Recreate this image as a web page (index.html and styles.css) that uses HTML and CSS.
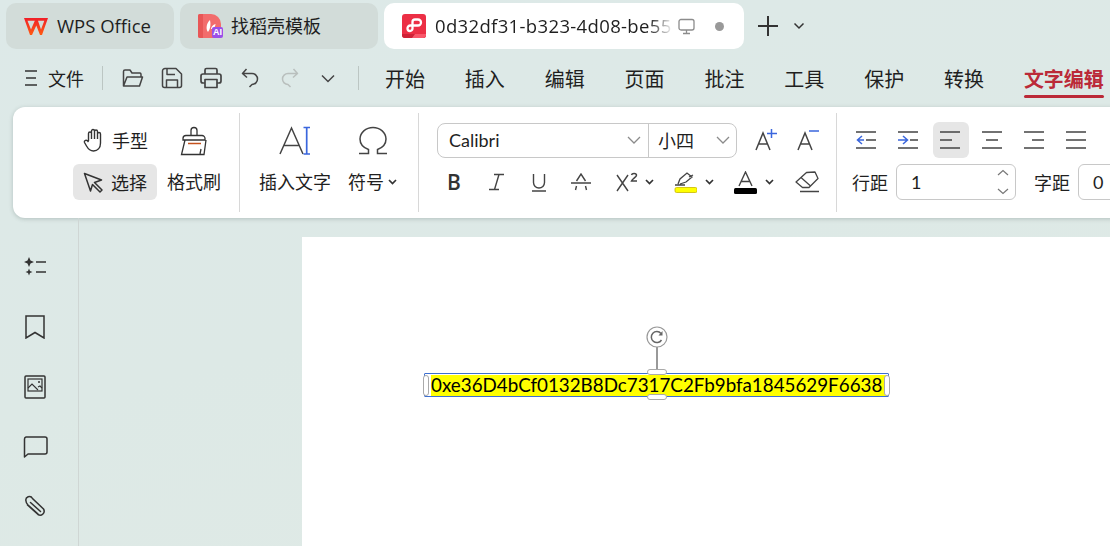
FILE: index.html
```html
<!DOCTYPE html>
<html lang="zh-CN">
<head>
<meta charset="utf-8">
<title>WPS Office</title>
<link rel="stylesheet" href="styles.css">
</head>
<body>
<div class="app">
  <header class="tabbar">
    <div class="doc-tab home-tab">
      <svg class="logo-wps" width="24" height="17" viewBox="0 0 24 17"><defs><linearGradient id="wpsRed" x1="0" y1="0" x2="0" y2="1"><stop offset="0" stop-color="#f01f28"/><stop offset="1" stop-color="#ff5a12"/></linearGradient></defs><path d="M0 0H24L18 17H16L12.300 7.500 8 17H6ZM3.500 2.800 7 11.500 10.800 2.800ZM14 2.800 17 11.500 20.300 2.800Z" fill="url(#wpsRed)" fill-rule="evenodd"/></svg>
      <span class="tab-title">WPS Office</span>
    </div>
    <div class="doc-tab shell-tab">
      <span class="logo-shell">
        <svg width="24" height="24" viewBox="0 0 24 24"><path d="M0 2a2 2 0 0 1 2-2H13a10 10 0 0 1 10 10V24H2a2 2 0 0 1-2-2Z" fill="#f26c6c"/><path d="M0 2a2 2 0 0 1 2-2H5V24H2a2 2 0 0 1-2-2Z" fill="#e85656"/><path d="M10 18C7.500 15 8.500 9 12 6 13 10 12.500 15 10 18ZM13 15C13 13 15 10.500 17.500 10 17.500 12.500 15.500 15 13 15Z" fill="#fff"/></svg>
        <span class="ai-badge">AI</span>
      </span>
      <span class="tab-title">找稻壳模板</span>
    </div>
    <div class="doc-tab active-tab">
      <svg width="24" height="24" viewBox="0 0 24 24"><rect width="24" height="24" rx="3" fill="#ec2f45"/><path d="M0 21V20H24V21A3 3 0 0 1 21 24H3A3 3 0 0 1 0 21Z" fill="#cf2236"/><path d="M13 20H24V21A3 3 0 0 1 21 24H10Z" fill="#f9576a"/><path d="M10 11.500H16A2.800 2.800 0 0 0 16 5.500H13A2.500 2.500 0 0 0 10.500 8V14.500A2.500 2.500 0 0 1 8 17 2.500 2.500 0 0 1 5.500 14.500 2.800 2.800 0 0 1 8.500 11.500H10" fill="none" stroke="#fff" stroke-width="2.300"/></svg>
      <span class="tab-title active-title">0d32df31-b323-4d08-be55</span>
      <svg class="monitor" width="17" height="17" viewBox="0 0 17 17"><rect x="1" y="1.500" width="15" height="10.500" rx="2" fill="none" stroke="#8c8c8c" stroke-width="1.300"/><path d="M8.500 12V15M5 15.500H12" stroke="#8c8c8c" stroke-width="1.300"/></svg>
      <span class="dot"></span>
    </div>
    <svg class="new-tab" width="22" height="22" viewBox="0 0 22 22"><path d="M11 1V21M1 11H21" stroke="#333" stroke-width="2"/></svg>
    <svg class="new-caret" width="12" height="8" viewBox="0 0 12 8"><path d="M1.500 1.500 6 6 10.500 1.500" fill="none" stroke="#333" stroke-width="1.500"/></svg>
  </header>

  <nav class="menubar">
    <div class="file-menu">
      <svg width="14" height="18" viewBox="0 0 14 18"><path d="M1 2H13M2 9H12M1 16H13" stroke="#333" stroke-width="1.500"/></svg>
      <span>文件</span>
    </div>
    <span class="menu-sep"></span>
    <div class="quick-tools">
      <svg width="22" height="20" viewBox="0 0 22 20"><path d="M1.500 18V3.500A1.500 1.500 0 0 1 3 2H8L10 5H18A1.500 1.500 0 0 1 19 6.500V9M1.500 18 5 9H20.500L17.500 18Z" fill="none" stroke="#444" stroke-width="1.500" stroke-linejoin="round"/></svg>
      <svg width="22" height="22" viewBox="0 0 22 22"><path d="M4 1.500H15L20.500 7V18.500A2 2 0 0 1 18.500 20.500H3.500A2 2 0 0 1 1.500 18.500V4A2.500 2.500 0 0 1 4 1.500ZM6 1.500V7.500H14M5.500 20.500V13H16.500V20.500" fill="none" stroke="#444" stroke-width="1.500" stroke-linejoin="round"/></svg>
      <svg width="22" height="22" viewBox="0 0 22 22"><path d="M5 7V3A1.500 1.500 0 0 1 6.500 1.500H15.500A1.500 1.500 0 0 1 17 3V7M5 16H3A2 2 0 0 1 1 14V9A2 2 0 0 1 3 7H19A2 2 0 0 1 21 9V14A2 2 0 0 1 19 16H17M5 12.500H17V20.500H5Z" fill="none" stroke="#444" stroke-width="1.700" stroke-linejoin="round"/></svg>
      <svg width="18" height="20" viewBox="0 0 18 20"><path d="M5.500 1 1.500 5.500 6 9.500M2 5.500H11A5.500 5.500 0 0 1 11 16.500L8.500 19" fill="none" stroke="#444" stroke-width="1.500" stroke-linejoin="round"/></svg>
      <svg width="18" height="20" viewBox="0 0 18 20"><path d="M12.500 1 16.500 5.500 12 9.500M16 5.500H7A5.500 5.500 0 0 0 7 16.500L9.500 19" fill="none" stroke="#b9bfbd" stroke-width="1.500" stroke-linejoin="round"/></svg>
      <svg width="14" height="9" viewBox="0 0 14 9"><path d="M1 1.500 7 7.500 13 1.500" fill="none" stroke="#444" stroke-width="1.500"/></svg>
    </div>
    <span class="menu-sep second"></span>
    <div class="ribbon-tabs">
      <span>开始</span><span>插入</span><span>编辑</span><span>页面</span><span>批注</span><span>工具</span><span>保护</span><span>转换</span><span class="tab-on">文字编辑</span>
    </div>
  </nav>

  <section class="ribbon">
    <div class="group group-tools">
      <div class="mode-col">
        <div class="mode-item">
          <svg width="22" height="24" viewBox="0 0 22 24"><path d="M5.500 13V5.500A1.500 1.500 0 0 1 8.500 5.500V11M8.500 11V3A1.500 1.500 0 0 1 11.500 3V11M11.500 11V3.500A1.500 1.500 0 0 1 14.500 3.500V11M14.500 11V6A1.500 1.500 0 0 1 17.500 6V15C17.500 20 14.500 23 10.500 23 7 23 5.500 21.500 3.500 18L1.500 14.500C.8 12.500 3.500 11 5.500 14" fill="none" stroke="#333" stroke-width="1.400" stroke-linejoin="round"/></svg>
          <span>手型</span>
        </div>
        <div class="mode-item is-on">
          <svg width="21" height="21" viewBox="0 0 21 21"><path d="M1.500 1.500 18.500 8 11.500 10.500 19 18 17 20 9.500 12.500 7.500 19Z" fill="none" stroke="#333" stroke-width="1.500" stroke-linejoin="round"/></svg>
          <span>选择</span>
        </div>
      </div>
      <div class="big-tool painter">
        <svg width="28" height="30" viewBox="0 0 28 30"><path d="M11 9V4.500A3 3 0 0 1 17 4.500V9M3 12.500A3 3 0 0 1 6 9.500H22A3 3 0 0 1 25 12.500V14H3ZM5 14 1.500 28.500H24L26 14" fill="none" stroke="#333" stroke-width="1.300"/><path d="M8 17.500H21" stroke="#c5521d" stroke-width="1.500"/><path d="M20 28 21 23" stroke="#333" stroke-width="1.300"/></svg>
        <span>格式刷</span>
      </div>
    </div>

    <div class="group group-insert">
      <div class="big-tool insert-text">
        <svg width="32" height="30" viewBox="0 0 32 30"><path d="M1 28 12.500 2 24 28M5 19.500H20" fill="none" stroke="#444" stroke-width="1.500"/><path d="M24.500 1.500H31M24.500 28H31M27.700 1.500V28" fill="none" stroke="#3a66dd" stroke-width="1.700"/></svg>
        <span>插入文字</span>
      </div>
      <div class="big-tool symbol">
        <svg width="30" height="30" viewBox="0 0 30 30"><path d="M1 27.500H10.500V23.500C5 21.500 2 18 2 13A13 11.500 0 0 1 28 13C28 18 25 21.500 19.500 23.500V27.500H29" fill="none" stroke="#444" stroke-width="1.500"/></svg>
        <span>符号<svg class="caret" width="9" height="6" viewBox="0 0 9 6"><path d="M1 1 4.500 4.500 8 1" fill="none" stroke="#333" stroke-width="1.700"/></svg></span>
      </div>
    </div>

    <div class="group group-font">
      <div class="font-row">
        <div class="combo">
          <div class="combo-name"><span>Calibri</span><svg width="14" height="8" viewBox="0 0 14 8"><path d="M1 1 7 7 13 1" fill="none" stroke="#8b8b8b" stroke-width="1.300"/></svg></div>
          <div class="combo-size"><span>小四</span><svg width="14" height="8" viewBox="0 0 14 8"><path d="M1 1 7 7 13 1" fill="none" stroke="#8b8b8b" stroke-width="1.300"/></svg></div>
        </div>
        <svg class="grow" width="22" height="22" viewBox="0 0 22 22"><path d="M1 21 8 4 15 21M3.500 15H12.500" fill="none" stroke="#444" stroke-width="1.500"/><path d="M16.500 0V9M12 4.500H22" stroke="#3a66dd" stroke-width="1.500"/></svg>
        <svg class="shrink" width="22" height="22" viewBox="0 0 22 22"><path d="M1 21 8 4 15 21M3.500 15H12.500" fill="none" stroke="#444" stroke-width="1.500"/><path d="M12 2H22" stroke="#3a66dd" stroke-width="1.500"/></svg>
      </div>
      <div class="format-row">
        <span class="fmt-b">B</span>
        <svg class="fmt-i" width="18" height="18" viewBox="0 0 18 18"><path d="M6 1.500H16M11 1.500 6.500 16.500M1 16.500H11" fill="none" stroke="#444" stroke-width="1.400"/></svg>
        <svg class="fmt-u" width="16" height="19" viewBox="0 0 16 19"><path d="M2.500 1V9.500A5.500 5.500 0 0 0 13.500 9.500V1M1 18H15" fill="none" stroke="#444" stroke-width="1.400"/></svg>
        <svg class="fmt-s" width="20" height="18" viewBox="0 0 20 18"><path d="M5.500 8 10 1 14.500 8M0 10H20M4.500 17 5.500 13M15.500 17 14.500 13" fill="none" stroke="#444" stroke-width="1.400"/></svg>
        <svg class="fmt-x" width="22" height="20" viewBox="0 0 22 20"><path d="M1 3 12 19M12 3 1 19" stroke="#444" stroke-width="1.400" fill="none"/><path d="M15.500 3C16 .8 20.500 .8 20.500 3.300 20.500 5 16.500 6.500 15.500 9H21" fill="none" stroke="#444" stroke-width="1.500"/></svg>
        <svg class="caret fmt-caret first-caret" width="9" height="6" viewBox="0 0 9 6"><path d="M1 1 4.500 4.500 8 1" fill="none" stroke="#333" stroke-width="1.700"/></svg>
        <svg class="fmt-hl" width="23" height="23" viewBox="0 0 23 23"><path d="M1 14H11M4 13 6 8 13 2 18 6 12 11 6 13M15 6 19 4" fill="none" stroke="#444" stroke-width="1.300"/><rect x="1" y="16.500" width="22" height="5" rx="1.500" fill="#ffff00" stroke="#c8b600" stroke-width=".8"/></svg>
        <svg class="caret fmt-caret" width="9" height="6" viewBox="0 0 9 6"><path d="M1 1 4.500 4.500 8 1" fill="none" stroke="#333" stroke-width="1.700"/></svg>
        <svg class="fmt-color" width="23" height="23" viewBox="0 0 23 23"><path d="M5 15 11.500 1 18 15M7 10.500H16" fill="none" stroke="#444" stroke-width="1.400"/><rect y="17" width="23" height="6" rx="1.500" fill="#000"/></svg>
        <svg class="caret fmt-caret" width="9" height="6" viewBox="0 0 9 6"><path d="M1 1 4.500 4.500 8 1" fill="none" stroke="#333" stroke-width="1.700"/></svg>
        <svg class="fmt-erase" width="24" height="22" viewBox="0 0 24 22"><path d="M1 11 11.500 1.500 20 1 23 7.500 14 16.500H7.500ZM6 6.500 15 14.500M5 20.500H24" fill="none" stroke="#444" stroke-width="1.300" stroke-linejoin="round"/></svg>
      </div>
    </div>

    <div class="group group-para">
      <div class="align-row">
        <span class="align-btn"><svg width="20" height="20" viewBox="0 0 20 20"><path d="M0 2H20M10 10H20M0 18H20" stroke="#444" stroke-width="1.300"/><path d="M6 6 1.500 10 6 14M1.500 10H8" fill="none" stroke="#3a66dd" stroke-width="1.500"/></svg></span>
        <span class="align-btn"><svg width="20" height="20" viewBox="0 0 20 20"><path d="M0 2H20M12 10H20M0 18H20" stroke="#444" stroke-width="1.300"/><path d="M5 6 9.500 10 5 14M0 10H9.500" fill="none" stroke="#3a66dd" stroke-width="1.500"/></svg></span>
        <span class="align-btn is-on"><svg width="20" height="20" viewBox="0 0 20 20"><path d="M0 2H20M0 10H12M0 18H20" stroke="#444" stroke-width="1.500"/></svg></span>
        <span class="align-btn"><svg width="20" height="20" viewBox="0 0 20 20"><path d="M0 2H20M4 10H16M0 18H20" stroke="#444" stroke-width="1.500"/></svg></span>
        <span class="align-btn"><svg width="20" height="20" viewBox="0 0 20 20"><path d="M0 2H20M8 10H20M0 18H20" stroke="#444" stroke-width="1.500"/></svg></span>
        <span class="align-btn"><svg width="20" height="20" viewBox="0 0 20 20"><path d="M0 2H20M0 10H20M0 18H20" stroke="#444" stroke-width="1.500"/></svg></span>
      </div>
      <div class="spacing-row">
        <span class="spacing-label">行距</span>
        <div class="stepper line-step"><span>1</span>
          <svg width="14" height="26" viewBox="0 0 14 26"><path d="M2 6 7 1.500 12 6M2 20 7 24.500 12 20" fill="none" stroke="#777" stroke-width="1.200"/></svg>
        </div>
        <span class="spacing-label letter-label">字距</span>
        <div class="stepper letter-step"><span>0</span></div>
      </div>
    </div>
  </section>

  <main class="workspace">
    <aside class="sidebar">
      <svg width="24" height="20" viewBox="0 0 24 20"><path d="M6 0 7.500 3.500 11 5 7.500 6.500 6 10 4.500 6.500 1 5 4.500 3.500ZM6 11.500 7 14 9.500 15 7 16 6 18.500 5 16 2.500 15 5 14Z" fill="#333"/><path d="M13 5H23M13 15H23" stroke="#333" stroke-width="1.500"/></svg>
      <svg width="20" height="24" viewBox="0 0 20 24"><path d="M1 1H19V23L10 17.500 1 23Z" fill="none" stroke="#333" stroke-width="1.500"/></svg>
      <svg width="22" height="24" viewBox="0 0 22 24"><rect x="1" y="1" width="20" height="22" rx="1" fill="none" stroke="#333" stroke-width="1.500"/><rect x="4" y="4" width="14" height="12" fill="none" stroke="#333" stroke-width="1.200"/><path d="M4 13 8 9 14 15M14 12 16 11 18 13" fill="none" stroke="#333" stroke-width="1.100"/><circle cx="15" cy="7" r="1" fill="#333"/></svg>
      <svg width="25" height="22" viewBox="0 0 25 22"><path d="M3 1H22A2 2 0 0 1 24 3V16A2 2 0 0 1 22 18H5L1.500 21V3A2 2 0 0 1 3 1Z" fill="none" stroke="#333" stroke-width="1.500" stroke-linejoin="round"/></svg>
      <svg width="24" height="24" viewBox="0 0 24 24"><path d="M7.500 7.500 17.500 16.500M4.500 10 15 19.500A4 4 0 0 0 20.500 14L9.500 3.500A3.500 3.500 0 0 0 3 6C3 7.500 3.500 8.500 5 10L15 19" fill="none" stroke="#333" stroke-width="1.500" stroke-linecap="round"/></svg>
    </aside>
    <div class="canvas">
      <div class="page">
        <div class="textbox">
          <div class="rotate-handle">
            <svg width="22" height="22" viewBox="0 0 22 22"><circle cx="11" cy="11" r="10" fill="#fff" stroke="#999" stroke-width="1.200"/><path d="M15.500 14A5.500 5.500 0 1 1 15 7.500" fill="none" stroke="#666" stroke-width="1.500"/><path d="M16.500 5V9.500H12.500Z" fill="#666"/></svg>
            <span class="rotate-stem"></span>
          </div>
          <span class="handle side left"></span>
          <span class="handle side right"></span>
          <span class="handle flat top"></span>
          <span class="handle flat bottom"></span>
          <span class="address">0xe36D4bCf0132B8Dc7317C2Fb9bfa1845629F6638</span>
        </div>
      </div>
    </div>
  </main>
</div>
</body>
</html>
```
FILE: styles.css
```css
* { box-sizing: border-box; }
html, body { margin: 0; height: 100%; }
body {
  overflow: hidden;
  color: #1f1f1f;
  font-family: "Open Sans", "Noto Sans CJK SC", sans-serif;
}
svg { display: block; flex: none; }
.app {
  width: 1110px;
  height: 546px;
  overflow: hidden;
  display: flex;
  flex-direction: column;
  background: linear-gradient(165deg, #dde9e8 0%, #dde9e6 50%, #e0eae6 100%);
}

/* Tabs */
.tabbar {
  height: 52px;
  flex: none;
  display: flex;
  align-items: center;
  padding: 3px 6px;
  gap: 6px;
}
.doc-tab {
  height: 46px;
  display: flex;
  align-items: center;
  border-radius: 10px;
  background: #d2dcd9;
  font-size: 18.500px;
  flex: none;
}
.home-tab { width: 168px; padding-left: 18px; gap: 9px; }
.shell-tab { width: 198px; padding-left: 18px; gap: 9px; font-size: 18px; }
.active-tab { width: 360px; padding-left: 18px; background: #fff; }
.tab-title { white-space: nowrap; padding-bottom: 2px; }
.active-title {
  width: 238px;
  margin-left: 9px;
  letter-spacing: .35px;
  overflow: hidden;
  -webkit-mask-image: linear-gradient(90deg, #000 90%, transparent 100%);
  mask-image: linear-gradient(90deg, #000 90%, transparent 100%);
}
.monitor { margin-left: 5px; }
.dot {
  width: 9px;
  height: 9px;
  margin-left: 20px;
  border-radius: 50%;
  background: #999;
}
.new-tab { margin-left: 7px; }
.new-caret { margin-left: 8px; }
.logo-shell { position: relative; width: 24px; height: 24px; }
.ai-badge {
  position: absolute;
  right: -1px;
  bottom: 0;
  width: 11px;
  height: 11px;
  border-radius: 2px;
  background: #9b4fe8;
  color: #fff;
  font: 700 9px/11px "Liberation Sans", sans-serif;
  text-align: center;
}

/* Menu */
.menubar {
  height: 52px;
  flex: none;
  display: flex;
  align-items: center;
  padding-left: 24px;
  font-size: 18px;
}
.file-menu { display: flex; align-items: center; gap: 10px; width: 78px; }
.menu-sep { width: 1px; height: 24px; background: #bcc6c3; }
.quick-tools {
  display: flex;
  align-items: center;
  width: 255px;
  padding-left: 19px;
  gap: 17px;
}
.quick-tools svg:nth-child(4) { margin-left: 2px; }
.quick-tools svg:nth-child(5) { margin-left: 5px; }
.quick-tools svg:nth-child(6) { margin-left: 5px; }
.ribbon-tabs {
  display: flex;
  gap: 39.860px;
  margin-left: 26px;
  font-size: 20px;
  white-space: nowrap;
}
.tab-on {
  position: relative;
  color: #bb2a38;
  font-weight: 700;
}
.tab-on::after {
  content: "";
  position: absolute;
  left: 0;
  right: 0;
  top: 31px;
  height: 3px;
  border-radius: 2px;
  background: #bb2a38;
}

/* Ribbon */
.ribbon {
  margin: 3px 0 0 13px;
  width: 1120px;
  height: 111px;
  flex: none;
  display: flex;
  padding: 6px 0;
  border-radius: 12px;
  background: #fff;
  box-shadow: 0 1px 4px rgba(80, 100, 95, .3);
  font-size: 18px;
}
.group {
  display: flex;
  flex: none;
  border-right: 1px solid #d8d8d8;
}
.group-tools { width: 227px; padding: 9px 0 0 60px; }
.mode-col { display: flex; flex-direction: column; gap: 6px; width: 84px; }
.mode-item {
  height: 36px;
  display: flex;
  align-items: center;
  gap: 7px;
  padding-left: 10px;
  border-radius: 6px;
}
.mode-item.is-on { background: #e6e6e6; }
.big-tool {
  display: flex;
  flex-direction: column;
  align-items: center;
  gap: 13px;
  padding-top: 4px;
  white-space: nowrap;
}
.big-tool > span { display: flex; align-items: center; line-height: 26px; }
.painter { margin-left: 10px; }
.group-insert { width: 179px; padding: 9px 0 0 19px; }
.symbol { margin-left: 17px; }
.caret { margin-left: 4px; }
.group-font {
  width: 418px;
  flex-direction: column;
  padding: 9px 0 0 18px;
}
.font-row { height: 36px; display: flex; align-items: center; }
.combo {
  width: 300px;
  height: 35px;
  display: flex;
  border: 1px solid #c8c8c8;
  border-radius: 8px;
}
.combo-name {
  width: 211px;
  display: flex;
  align-items: center;
  justify-content: space-between;
  padding: 0 7px 0 11px;
  border-right: 1px solid #c8c8c8;
  font-family: "Lato", sans-serif;
  font-size: 18px;
}
.combo-size {
  flex: 1;
  display: flex;
  align-items: center;
  justify-content: space-between;
  padding: 0 6px 0 9px;
}
.grow { margin-left: 18px; }
.shrink { margin-left: 20px; }
.format-row {
  height: 36px;
  margin-top: 6px;
  padding-left: 10px;
  display: flex;
  align-items: center;
}
.fmt-b {
  width: 15px;
  font: 600 21px/1 "Open Sans", sans-serif;
  color: #333;
}
.fmt-i { margin-left: 26px; }
.fmt-u { margin-left: 25px; }
.fmt-s { margin-left: 24px; }
.fmt-x { margin-left: 25px; }
.fmt-caret { margin-left: 8px; }
.first-caret { margin-left: 7px; }
.fmt-hl { margin-left: 20px; }
.fmt-color { margin-left: 20px; }
.fmt-erase { margin-left: 21px; }
.group-para {
  flex-direction: column;
  border-right: 0;
  padding: 9px 0 0 12px;
}
.align-row { height: 36px; display: flex; gap: 6px; }
.align-btn {
  width: 36px;
  height: 36px;
  display: flex;
  align-items: center;
  justify-content: center;
  padding-right: 2px;
  border-radius: 6px;
}
.align-btn.is-on { background: #e6e6e6; }
.spacing-row {
  height: 36px;
  margin: 6px 0 0 3px;
  display: flex;
  align-items: center;
}
.spacing-label { width: 36px; }
.stepper {
  height: 36px;
  margin-left: 8px;
  display: flex;
  align-items: center;
  justify-content: space-between;
  padding: 0 5px 0 14px;
  border: 1px solid #c8c8c8;
  border-radius: 6px;
  font-family: "Lato", sans-serif;
}
.line-step { width: 120px; }
.letter-label { margin-left: 18px; }
.letter-step { width: 80px; }

/* Workspace */
.workspace { flex: 1; display: flex; min-height: 0; }
.sidebar {
  width: 79px;
  flex: none;
  padding-top: 37px;
  display: flex;
  flex-direction: column;
  align-items: center;
  border-right: 1px solid #cfd6d4;
}
.sidebar svg {
  height: 24px;
  margin: 0 8px 36px 0;
}
.canvas { flex: 1; padding: 19px 0 0 223px; min-width: 0; }
.page {
  height: 400px;
  background: #fff;
  padding: 136px 0 0 122px;
}
.textbox {
  position: relative;
  width: 465px;
  height: 24px;
  padding: 1px 0 0 6px;
  border: 1px solid #3d6fd0;
  border-radius: 1px;
}
.address {
  display: block;
  width: 456px;
  height: 21px;
  background: #ffff00;
  color: #000;
  font: 18.800px/19px "Lato", sans-serif;
  white-space: nowrap;
}
.handle {
  position: absolute;
  background: #fff;
  border: 1px solid #aaa;
  border-radius: 3px;
}
.side { top: 1px; width: 6px; height: 21px; }
.side.left { left: -2px; }
.side.right { right: -2px; }
.flat { left: 222px; width: 20px; height: 6px; }
.flat.top { top: -5px; }
.flat.bottom { bottom: -4px; }
.rotate-handle {
  position: absolute;
  left: 221px;
  top: -48px;
  width: 22px;
  display: flex;
  flex-direction: column;
  align-items: center;
}
.rotate-stem { width: 2px; height: 23px; background: #999; margin-top: -1px; }
```
